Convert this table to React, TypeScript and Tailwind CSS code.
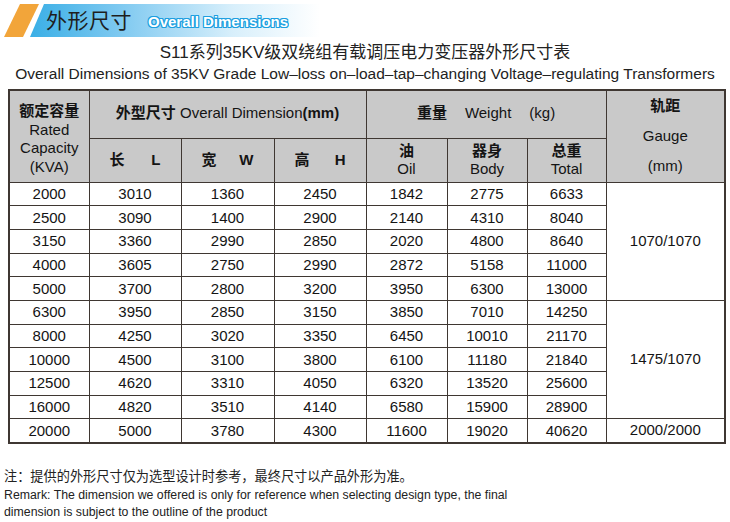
import React from "react";

const rows: string[][] = [
  ["2000", "3010", "1360", "2450", "1842", "2775", "6633"],
  ["2500", "3090", "1400", "2900", "2140", "4310", "8040"],
  ["3150", "3360", "2990", "2850", "2020", "4800", "8640"],
  ["4000", "3605", "2750", "2990", "2872", "5158", "11000"],
  ["5000", "3700", "2800", "3200", "3950", "6300", "13000"],
  ["6300", "3950", "2850", "3150", "3850", "7010", "14250"],
  ["8000", "4250", "3020", "3350", "6450", "10010", "21170"],
  ["10000", "4500", "3100", "3800", "6100", "11180", "21840"],
  ["12500", "4620", "3310", "4050", "6320", "13520", "25600"],
  ["16000", "4820", "3510", "4140", "6580", "15900", "28900"],
  ["20000", "5000", "3780", "4300", "11600", "19020", "40620"],
];

// 轨距 merged cells: start row index -> [rowSpan, text]
const gauge: Record<number, [number, string]> = {
  0: [5, "1070/1070"],
  5: [5, "1475/1070"],
  10: [1, "2000/2000"],
};

const cell = "border border-[#3f3732] p-0 text-center align-middle";

function Banner() {
  return (
    <div className="flex items-stretch h-[33px] mt-[4px]">
      <div className="shrink-0 w-[35px] ml-[4px] bg-[#f2a53a] [clip-path:polygon(16px_0,100%_0,calc(100%-16px)_100%,0_100%)]" />
      <div className="shrink-0 -ml-[9px] w-[290px] flex items-center whitespace-nowrap bg-[linear-gradient(90deg,#3aafe6_0%,#7cc8f0_30%,#d8effb_70%,#ffffff_100%)] [clip-path:polygon(14px_0,100%_0,100%_100%,0_100%)]">
        <span className="ml-[16px] text-[21px] tracking-[0.5px] text-[#1e1e1e]">外形尺寸</span>
        <span className="ml-[16px] mt-[4px] text-[15px] font-black text-white [text-shadow:1px_0_#1d9fe0,-1px_0_#1d9fe0,0_1px_#1d9fe0,0_-1px_#1d9fe0,1px_1px_#1d9fe0,-1px_-1px_#1d9fe0,1px_-1px_#1d9fe0,-1px_1px_#1d9fe0]">
          Overall Dimensions
        </span>
      </div>
    </div>
  );
}

export default function App() {
  return (
    <div className="w-[730px] h-[522px] bg-white text-[#141414] overflow-hidden font-['Liberation_Sans','Noto_Sans_CJK_SC',sans-serif]">
      <Banner />

      <div className="mt-[5px] text-center text-[17px] leading-[22px] text-[#222]">
        S11系列35KV级双绕组有载调压电力变压器外形尺寸表
      </div>
      <div className="text-center text-[15.5px] leading-[20px] text-[#222]">
        Overall Dimensions of 35KV Grade Low–loss on–load–tap–changing Voltage–regulating Transformers
      </div>

      <div className="px-[8px] mt-[5px]">
        <table className="w-[716px] table-fixed border-collapse border-2 border-[#3f3732] text-[15px]">
          <colgroup>
            <col className="w-[80px]" />
            <col className="w-[92px]" />
            <col className="w-[93px]" />
            <col className="w-[92px]" />
            <col className="w-[81px]" />
            <col className="w-[80px]" />
            <col className="w-[79px]" />
            <col className="w-[119px]" />
          </colgroup>
          <thead className="bg-[#c9c9c9]">
            <tr className="h-[48px]">
              <td rowSpan={2} className={cell}>
                <div className="flex flex-col items-center pt-[6px] leading-[18.5px]">
                  <span className="font-bold">额定容量</span>
                  <span>Rated</span>
                  <span>Capacity</span>
                  <span>(KVA)</span>
                </div>
              </td>
              <td colSpan={3} className={cell}>
                <div className="-mt-[3px]">
                  <span className="font-bold">外型尺寸</span> Overall Dimension<span className="font-bold">(mm)</span>
                </div>
              </td>
              <td colSpan={3} className={cell}>
                <div className="-mt-[3px] flex justify-center gap-[18px]">
                  <span className="font-bold">重量</span>
                  <span>Weight</span>
                  <span>(kg)</span>
                </div>
              </td>
              <td rowSpan={2} className={cell}>
                <div className="flex flex-col items-center gap-[12px] leading-[18px]">
                  <span className="font-bold">轨距</span>
                  <span>Gauge</span>
                  <span>(mm)</span>
                </div>
              </td>
            </tr>
            <tr className="h-[44px]">
              {[
                ["长", "L"],
                ["宽", "W"],
                ["高", "H"],
              ].map(([zh, en]) => (
                <td key={en} className={cell}>
                  <div className="flex justify-between px-[20px]">
                    <span className="font-bold">{zh}</span>
                    <span className="font-bold">{en}</span>
                  </div>
                </td>
              ))}
              {[
                ["油", "Oil"],
                ["器身", "Body"],
                ["总重", "Total"],
              ].map(([zh, en]) => (
                <td key={en} className={cell}>
                  <div className="flex flex-col items-center leading-[18px]">
                    <span className="font-bold">{zh}</span>
                    <span>{en}</span>
                  </div>
                </td>
              ))}
            </tr>
          </thead>
          <tbody>
            {rows.map((r, i) => (
              <tr key={r[0]} className="h-[23.7px]">
                {r.map((v, j) => (
                  <td key={j} className={`${cell} leading-[20px]`}>
                    {v}
                  </td>
                ))}
                {gauge[i] && (
                  <td rowSpan={gauge[i][0]} className={cell}>
                    {gauge[i][1]}
                  </td>
                )}
              </tr>
            ))}
          </tbody>
        </table>
      </div>

      <div className="mt-[24px] px-[4px] text-[13.2px] leading-[17px] text-[#222]">
        注：提供的外形尺寸仅为选型设计时参考，最终尺寸以产品外形为准。
      </div>
      <div className="mt-[2px] px-[4px] text-[12.3px] leading-[17px] text-[#222]">
        Remark: The dimension we offered is only for reference when selecting design type, the final
        <br />
        dimension is subject to the outline of the product
      </div>
    </div>
  );
}
